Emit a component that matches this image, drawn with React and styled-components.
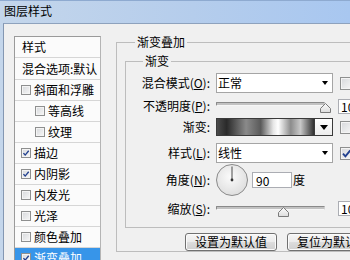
import React from "react";
import styled, { createGlobalStyle } from "styled-components";

const FONT = `"Noto Sans CJK SC", "Noto Sans", "Liberation Sans", sans-serif`;

const GlobalStyle = createGlobalStyle`
  html, body { margin: 0; padding: 0; }
  body {
    width: 350px; height: 260px; overflow: hidden;
    background: #f0f0f0;
    font-family: ${FONT};
    font-size: 12px;
    color: #000;
  }
  *, *::before, *::after { box-sizing: border-box; }
`;

const Window = styled.div`
  width: 350px;
  height: 260px;
  overflow: hidden;
  display: flex;
  flex-direction: column;
  background: linear-gradient(90deg, #c4d6eb 0%, #b5cdec 55%, #a8c7f0 100%);
`;

const TitleBar = styled.div`
  flex: none;
  height: 23px;
  display: flex;
  align-items: center;
  padding: 0 0 2px 4px;
  border-top: 1px solid #8eaad0;
  line-height: 14px;
`;

const Body = styled.div`
  flex: 1;
  min-height: 0;
  display: flex;
  align-items: flex-start;
  margin-left: 3px;
  border-left: 1px solid #8497b2;
  border-top: 1px solid #8ea2bd;
  background: #f0f0f0;
`;

/* ---------- left style list ---------- */
const StyleList = styled.div`
  flex: none;
  width: 87px;
  height: 240px;
  margin: 12px 0 0 10px;
  border: 1px solid #9a9a9a;
  border-right-color: #b4b4b4;
  background: #fbfbfb;
  overflow: hidden;
`;

const ListItem = styled.div`
  height: ${(p) => p.$h || 21}px;
  display: flex;
  align-items: center;
  gap: 3px;
  padding-left: ${(p) => p.$pad}px;
  border-bottom: 1px solid #d6d6d6;
  background: ${(p) => (p.$selected ? "#3795e9" : "transparent")};
  color: ${(p) => (p.$selected ? "#fff" : "#000")};
  line-height: 14px;
  white-space: nowrap;
`;

const CheckBox = styled.span`
  flex: none;
  display: inline-flex;
  align-items: center;
  justify-content: center;
  width: ${(p) => p.$size}px;
  height: ${(p) => p.$size}px;
  border: 1px solid #8e8f8f;
  background: linear-gradient(135deg, #d6d8db 0%, #f7f7f7 100%);
  box-shadow: inset 0 0 0 1px #f4f4f4;
  margin-left: ${(p) => p.$ml || 0}px;
`;

function Check({ size, checked, ml }) {
  return (
    <CheckBox $size={size} $ml={ml}>
      {checked && (
        <svg width={size - 2} height={size - 2} viewBox="0 0 10 10">
          <path d="M1.8 5.2 L4 7.6 L8.4 2.2" fill="none" stroke="#22408f" strokeWidth="1.7" />
        </svg>
      )}
    </CheckBox>
  );
}

/* ---------- right panel ---------- */
const Group = styled.fieldset`
  flex: none;
  width: ${(p) => p.$w}px;
  margin: ${(p) => p.$mt}px 0 0 ${(p) => p.$ml}px;
  padding: 0 0 ${(p) => p.$pb || 0}px 0;
  border: 1px solid #bdbdbd;
  min-width: 0;
`;

const GroupTitle = styled.legend`
  margin-left: ${(p) => p.$offset}px;
  padding: 0 2px;
  line-height: 14px;
  font-size: 12px;
  background: #f0f0f0;
`;

const GroupInner = styled.div`
  padding-left: 8px;
`;

const FormRow = styled.div`
  display: grid;
  grid-template-columns: 90px 117px auto;
  align-items: center;
  height: ${(p) => p.$h}px;
  margin-top: ${(p) => p.$mt}px;
`;

const Label = styled.label`
  text-align: right;
  padding-right: 6px;
  line-height: 14px;
  white-space: nowrap;
`;

const Key = styled.span`
  text-decoration: underline;
`;

const Side = styled.div`
  padding-left: 5px;
  display: flex;
  align-items: center;
  gap: 4px;
  white-space: nowrap;
`;

const Select = styled.div`
  height: 20px;
  display: flex;
  align-items: center;
  justify-content: space-between;
  padding: 0 4px 0 1px;
  border: 1px solid #a5a5a5;
  background: #fff;
  line-height: 14px;
`;

const Arrow = styled.span`
  width: 0;
  height: 0;
  border-left: ${(p) => p.$w / 2}px solid transparent;
  border-right: ${(p) => p.$w / 2}px solid transparent;
  border-top: ${(p) => p.$h}px solid #000;
`;

const SliderWrap = styled.div`
  position: relative;
  width: 109px;
  height: 13px;
  margin-top: ${(p) => p.$mt || 0}px;
`;

const Track = styled.div`
  height: 4px;
  margin-top: 2px;
  border: 1px solid;
  border-color: #8a8a8a #d0d0d0 #f6f6f6 #8a8a8a;
  background: #c2c2c2;
  border-radius: 1px;
`;

const Thumb = styled.svg`
  position: absolute;
  top: 3px;
`;

function Slider({ pos, mt }) {
  return (
    <SliderWrap $mt={mt}>
      <Track />
      <Thumb width="11" height="10" viewBox="0 0 11 10" style={{ left: pos * 109 - 5.5 }}>
        <defs>
          <linearGradient id="tg" x1="0" y1="0" x2="0" y2="1">
            <stop offset="0" stopColor="#fdfdfd" />
            <stop offset="1" stopColor="#dcdcdc" />
          </linearGradient>
        </defs>
        <path d="M0.5 9.5 V5.5 L5.5 0.5 L10.5 5.5 V9.5 Z" fill="url(#tg)" stroke="#7a7a7a" />
      </Thumb>
    </SliderWrap>
  );
}

const NumBox = styled.div`
  flex: none;
  width: ${(p) => p.$w}px;
  height: ${(p) => p.$h}px;
  border: 1px solid #abadb3;
  background: #fff;
  padding-left: ${(p) => p.$pl}px;
  display: flex;
  align-items: center;
  line-height: 13px;
`;

const GradientPicker = styled.div`
  display: flex;
  height: 18px;
  border: 1px solid #3a3a3a;
`;

const GradientSwatch = styled.div`
  flex: 1;
  background: linear-gradient(
    90deg,
    #4a4a4a 0%,
    #2a2a2a 10%,
    #8a8a8a 30%,
    #5a5a5a 45%,
    #e6e6e6 58%,
    #ffffff 63%,
    #8c8c8c 76%,
    #c8c8c8 86%,
    #303030 100%
  );
`;

const PickerButton = styled.div`
  flex: none;
  width: 18px;
  border-left: 1px solid #3a3a3a;
  background: linear-gradient(#ffffff, #ececec);
  display: flex;
  align-items: center;
  justify-content: center;
`;

const AngleBox = styled.div`
  display: flex;
  align-items: center;
`;

const Unit = styled.span`
  margin-left: 1px;
  line-height: 14px;
`;

function Dial({ angle }) {
  const r = (angle * Math.PI) / 180;
  const x2 = 16 + 13.5 * Math.cos(r);
  const y2 = 16 - 13.5 * Math.sin(r);
  return (
    <svg width="32" height="32" viewBox="0 0 32 32">
      <defs>
        <radialGradient id="dg" cx="45%" cy="40%" r="65%">
          <stop offset="0" stopColor="#fbfbfb" />
          <stop offset="1" stopColor="#dcdcdc" />
        </radialGradient>
      </defs>
      <circle cx="16" cy="16" r="15.5" fill="url(#dg)" stroke="#8a8a8a" />
      <line x1="16" y1="16" x2={x2} y2={y2} stroke="#4a4a4a" strokeWidth="1" />
      <circle cx="16" cy="16" r="1.4" fill="#333" />
    </svg>
  );
}

const ButtonRow = styled.div`
  display: flex;
  gap: 10px;
  margin: 5px 0 0 60px;
`;

const Button = styled.button`
  flex: none;
  width: 92px;
  height: 18px;
  padding: 0;
  border: 1px solid #707070;
  border-radius: 3px;
  background: linear-gradient(#f6f6f6, #ebebeb 50%, #dddddd 51%, #cfcfcf);
  box-shadow: inset 0 0 0 1px #fbfbfb;
  font-family: ${FONT};
  font-size: 12px;
  line-height: 14px;
  color: #000;
  white-space: nowrap;
`;

const styles = [
  { name: "斜面和浮雕", checked: false },
  { name: "等高线", checked: false, indent: true },
  { name: "纹理", checked: false, indent: true },
  { name: "描边", checked: true },
  { name: "内阴影", checked: true },
  { name: "内发光", checked: false },
  { name: "光泽", checked: false },
  { name: "颜色叠加", checked: false },
  { name: "渐变叠加", checked: true, selected: true },
  { name: "图案叠加", checked: false },
];

export default function App() {
  return (
    <>
      <GlobalStyle />
      <Window>
        <TitleBar>图层样式</TitleBar>
        <Body>
          <StyleList>
            <ListItem $h={21} $pad={7}>样式</ListItem>
            <ListItem $h={22} $pad={7}>混合选项:默认</ListItem>
            {styles.map((s) => (
              <ListItem key={s.name} $pad={s.indent ? 20 : 6} $selected={s.selected}>
                <Check size={10} checked={s.checked} />
                {s.name}
              </ListItem>
            ))}
          </StyleList>

          <Group $w={300} $mt={11} $ml={15}>
            <GroupTitle $offset={18}>渐变叠加</GroupTitle>
            <GroupInner>
              <Group $w={280} $mt={5} $ml={0} $pb={11}>
                <GroupTitle $offset={17}>渐变</GroupTitle>

                <FormRow $h={20} $mt={5}>
                  <Label>混合模式(<Key>O</Key>):</Label>
                  <Select>
                    正常
                    <Arrow $w={7} $h={4} />
                  </Select>
                  <Side>
                    <Check size={13} ml={2} />
                    仿色
                  </Side>
                </FormRow>

                <FormRow $h={20} $mt={3}>
                  <Label>不透明度(<Key>P</Key>):</Label>
                  <Slider pos={1} />
                  <Side>
                    <NumBox $w={32} $h={15} $pl={2}>100</NumBox>%
                  </Side>
                </FormRow>

                <FormRow $h={18} $mt={2}>
                  <Label>渐变:</Label>
                  <GradientPicker>
                    <GradientSwatch />
                    <PickerButton>
                      <Arrow $w={8} $h={5} />
                    </PickerButton>
                  </GradientPicker>
                  <Side>
                    <Check size={13} ml={2} />
                    反向(<Key>R</Key>)
                  </Side>
                </FormRow>

                <FormRow $h={20} $mt={7}>
                  <Label>样式(<Key>L</Key>):</Label>
                  <Select>
                    线性
                    <Arrow $w={7} $h={4} />
                  </Select>
                  <Side>
                    <Check size={13} ml={2} checked />
                    与图层对齐(<Key>I</Key>)
                  </Side>
                </FormRow>

                <FormRow $h={32} $mt={1}>
                  <Label>角度(<Key>N</Key>):</Label>
                  <AngleBox>
                    <Dial angle={90} />
                    <NumBox $w={40} $h={16} $pl={3} style={{ marginLeft: 4 }}>90</NumBox>
                    <Unit>度</Unit>
                  </AngleBox>
                  <Side />
                </FormRow>

                <FormRow $h={16} $mt={4}>
                  <Label>缩放(<Key>S</Key>):</Label>
                  <Slider pos={0.615} mt={4} />
                  <Side>
                    <NumBox $w={32} $h={15} $pl={2}>100</NumBox>%
                  </Side>
                </FormRow>
              </Group>

              <ButtonRow>
                <Button>设置为默认值</Button>
                <Button>复位为默认值</Button>
              </ButtonRow>
            </GroupInner>
          </Group>
        </Body>
      </Window>
    </>
  );
}
